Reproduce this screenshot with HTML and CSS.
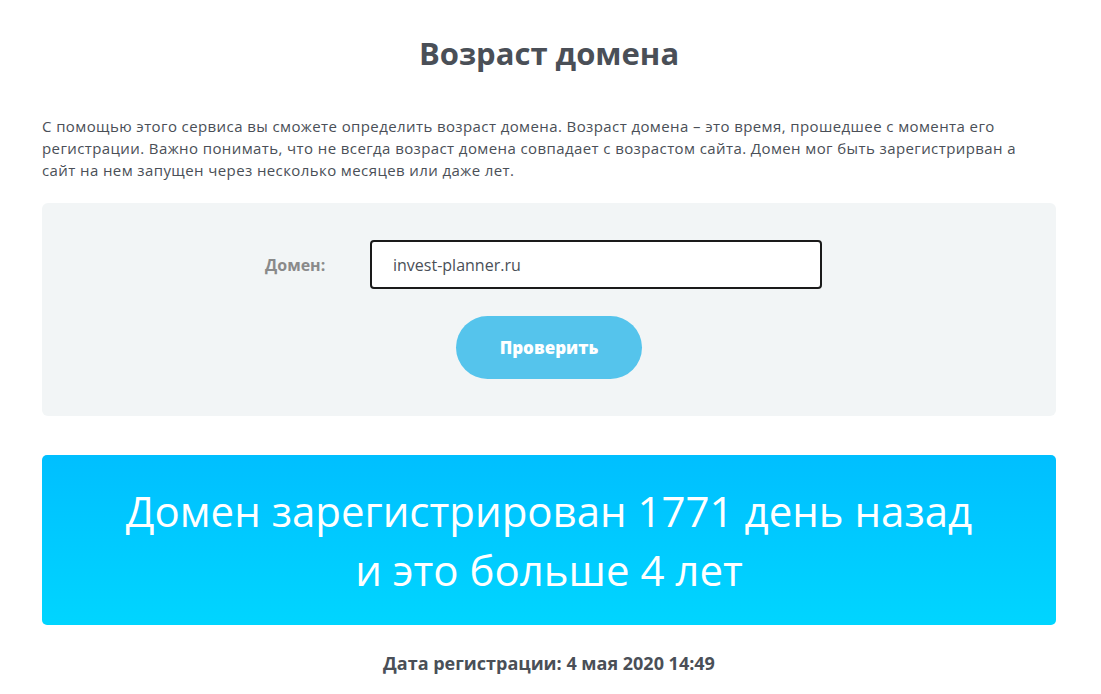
FILE: index.html
```html
<!DOCTYPE html>
<html lang="ru">
<head>
<meta charset="utf-8">
<title>Возраст домена</title>
<link rel="stylesheet" href="styles.css">
</head>
<body>
<main class="page">
  <h1 class="title">Возраст домена</h1>
  <p class="intro">С помощью этого сервиса вы сможете определить возраст домена. Возраст домена – это время, прошедшее с момента его регистрации. Важно понимать, что не всегда возраст домена совпадает с возрастом сайта. Домен мог быть зарегистрирван а сайт на нем запущен через несколько месяцев или даже лет.</p>
  <form class="check-box">
    <div class="field-row">
      <label class="field-label" for="domain">Домен:</label>
      <input class="field-input" id="domain" type="text" value="invest-planner.ru">
    </div>
    <button class="check-btn" type="button">Проверить</button>
  </form>
  <div class="result">
    <div class="result-line">Домен зарегистрирован 1771 день назад</div>
    <div class="result-line">и это больше 4 лет</div>
  </div>
  <p class="reg-date">Дата регистрации: 4 мая 2020 14:49</p>
</main>
</body>
</html>
```

FILE: styles.css
```css
* { box-sizing: border-box; }
body {
  margin: 0;
  background: #ffffff;
  color: #4a4f57;
  font-family: "Open Sans", "Noto Sans", sans-serif;
}
.page {
  width: 1014px;
  margin-left: 42px;
  padding-top: 33px;
}
.title {
  margin: 0;
  text-align: center;
  font-family: "Open Sans", sans-serif;
  font-weight: 700;
  font-size: 31px;
  line-height: 40px;
  color: #4a4f57;
}
.intro {
  margin: 42px 0 0;
  padding-right: 24px;
  font-size: 15px;
  line-height: 22px;
  letter-spacing: 0.4px;
  color: #4a4f57;
}
.check-box {
  margin: 22px 0 0;
  background: #f2f5f6;
  border-radius: 6px;
  height: 213px;
  padding-top: 37px;
  display: flex;
  flex-direction: column;
  align-items: center;
}
.field-row {
  display: flex;
  align-items: center;
  margin-right: 11px;
}
.field-label {
  width: 105px;
  font-weight: 700;
  font-size: 16px;
  color: #8a8a8a;
}
.field-input {
  width: 452px;
  height: 49px;
  border: 2px solid #1a1a1a;
  border-radius: 4px;
  padding: 0 21px;
  font-family: "Open Sans", sans-serif;
  font-size: 16px;
  color: #4a4f57;
  background: #fff;
  outline: none;
}
.check-btn {
  margin-top: 27px;
  width: 186px;
  height: 63px;
  border: none;
  border-radius: 32px;
  background: #55c4ec;
  color: #fff;
  font-family: "Open Sans", sans-serif;
  font-weight: 800;
  font-size: 17px;
  cursor: pointer;
}
.result {
  margin-top: 39px;
  height: 170px;
  border-radius: 5px;
  background: linear-gradient(180deg, #00bfff 0%, #00d5ff 100%);
  color: #fff;
  display: flex;
  flex-direction: column;
  justify-content: center;
  align-items: center;
  font-family: "Open Sans", sans-serif;
  font-weight: 400;
  font-size: 42px;
  line-height: 59px;
}
.reg-date {
  margin: 26px 0 0;
  text-align: center;
  font-family: "Open Sans", sans-serif;
  font-weight: 700;
  font-size: 18px;
  color: #4a4f57;
}
```
